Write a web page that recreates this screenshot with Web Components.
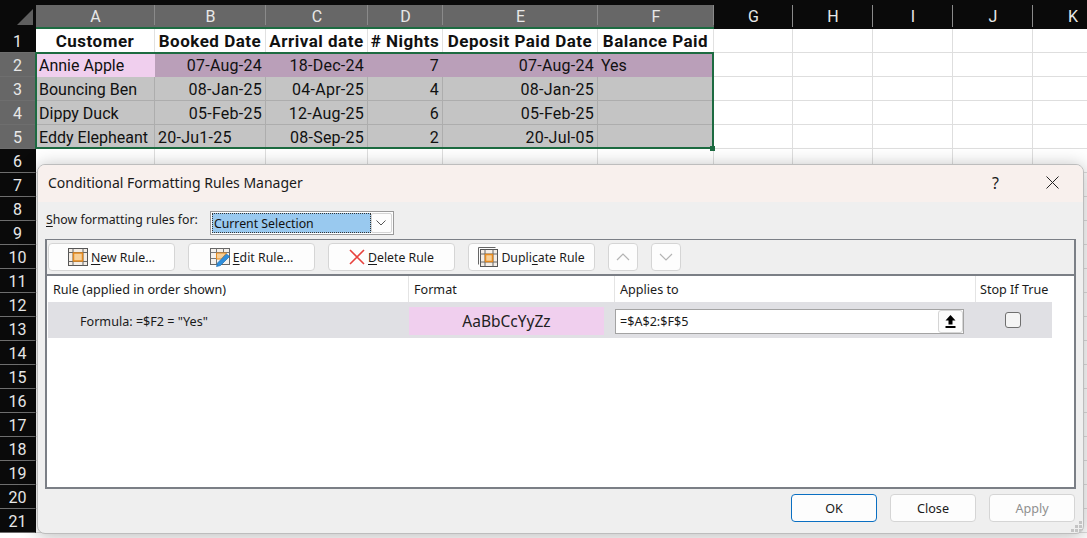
<!DOCTYPE html>
<html lang="en">
<head>
<meta charset="utf-8">
<title>Conditional Formatting Rules Manager</title>
<style>
  html, body { margin: 0; height: 538px; overflow: hidden; background: #fff; }
</style>
</head>
<body>
<xl-app></xl-app>
<script>
const UI_FONT = `"Noto Sans", "Open Sans", sans-serif`;
const ICONS = {
  new: `<svg width="20" height="18" viewBox="0 0 20 18"><rect x=".5" y=".5" width="19" height="17" fill="#f3ede6" stroke="#555"/><path d="M.5 4.500h19M.5 13.500h19M5 .5v17M15 .5v17" stroke="#666" fill="none"/><rect x="5.500" y="5" width="9" height="8" fill="#f7cf97" stroke="#e58a1f" stroke-width="1.500"/></svg>`,
  edit: `<svg width="20" height="19" viewBox="0 0 20 19"><rect x=".5" y=".5" width="19" height="16" fill="#f5f1ec" stroke="#666"/><path d="M.5 4.500h19M.5 10.500h7M6.500 .5v16M13.500 .5v6" stroke="#777" fill="none"/><path d="M6.500 5h10l-5 6H6.500z" fill="#f7cf97" stroke="#e58a1f"/><path d="M6.500 18.500l1-3.500 9-9 3 2.500-9 9z" fill="#2f8fdc" stroke="#1a6db5" stroke-width=".7"/></svg>`,
  del: `<svg width="16" height="16" viewBox="0 0 16 16"><path d="M1 1l14 14M15 1L1 15" stroke="#e8413c" stroke-width="1.600" fill="none"/></svg>`,
  dup: `<svg width="20" height="20" viewBox="0 0 20 20"><path d="M.5 17.500V.5h17" stroke="#666" fill="none"/><rect x="2.500" y="2.500" width="17" height="17" fill="#f3ede6" stroke="#555"/><path d="M2.500 7h17M2.500 15h17M7 2.500v17M15 2.500v17" stroke="#666" fill="none"/><rect x="7.500" y="7.500" width="7" height="7" fill="#f7cf97" stroke="#e58a1f" stroke-width="1.500"/></svg>`,
  up: `<svg width="14" height="8" viewBox="0 0 14 8"><path d="M1 7l6-6 6 6" stroke="#b4b4b4" stroke-width="1.200" fill="none"/></svg>`,
  down: `<svg width="14" height="8" viewBox="0 0 14 8"><path d="M1 1l6 6 6-6" stroke="#b4b4b4" stroke-width="1.200" fill="none"/></svg>`
};

class XlSheet extends HTMLElement {
  constructor() {
    super();
    this.attachShadow({ mode: "open" });
  }

  static get styles() {
    return /* css */`
      :host {
        display: block;
        position: relative;
        width: 1087px;
        height: 538px;
        overflow: hidden;
        font-family: Roboto, sans-serif;
        font-size: 16px;
        color: #111;
      }
      .grid {
        display: grid;
        grid-template-columns: 36px 119px 111px 102px 75px 155px 116px 79px 80px 80px 80px 80px;
        grid-template-rows: 29px 24px repeat(21, 24px);
      }
      .corner, .col, .row { background: #0a0a0a; color: #e8e8e8; display: flex; align-items: center; justify-content: center; box-sizing: border-box; font-size: 16px; }
      .corner { position: relative; }
      .corner::after { content: ""; position: absolute; right: 3px; bottom: 4px; border-style: solid; border-width: 0 0 16px 16px; border-color: transparent transparent #5f5f5f transparent; }
      .col { padding-top: 6px; padding-bottom: 2px; position: relative; }
      .col::after { content: ""; position: absolute; right: 0; top: 5px; bottom: 2px; width: 1px; background: #8a8a8a; }
      .col.on { background: linear-gradient(#0a0a0a 5px, #676767 5px); border-bottom: 2px solid #1d6b41; padding-bottom: 0; }
      .row { border-bottom: 1px solid #6e6e6e; border-right: 1px solid #0a0a0a; padding-top: 1px; }
      .row.on { background: #676767; border-right-color: #1d6b41; }
      .cell {
        box-sizing: border-box;
        padding: 1px 3px 0;
        display: flex;
        align-items: center;
        white-space: nowrap;
        overflow: hidden;
        border-right: 1px solid #e1e1e1;
        border-bottom: 1px solid #e1e1e1;
      }
      .cell.r { justify-content: flex-end; }
      .cell.d { letter-spacing: .25px; }
      .cell.h { justify-content: center; font-weight: 700; font-size: 17px; letter-spacing: .5px; padding: 0; }
      .cell.plain { border-color: #dedede; }
      .cell.g { background: #c4c4c4; border-color: #adadad; }
      .cell.m { background: #ba9fb9; border-color: #ba9fb9; }
      .cell.p { background: #f0cfee; border-color: #f0cfee; }
      .sel { position: absolute; left: 35px; top: 52px; width: 679px; height: 97px; box-sizing: border-box; border: 2px solid #1d6b41; pointer-events: none; }
      .sel::after { content: ""; position: absolute; right: -3px; bottom: -4px; width: 5px; height: 5px; background: #1d6b41; }
    `;
  }

  connectedCallback() {
    const cols = "ABCDEFGHIJK".split("");
    const data = [
      ["Customer", "Booked Date", "Arrival date", "# Nights", "Deposit Paid Date", "Balance Paid"],
      ["Annie Apple", "07-Aug-24", "18-Dec-24", "7", "07-Aug-24", "Yes"],
      ["Bouncing Ben", "08-Jan-25", "04-Apr-25", "4", "08-Jan-25", ""],
      ["Dippy Duck", "05-Feb-25", "12-Aug-25", "6", "05-Feb-25", ""],
      ["Eddy Elepheant", "20-Ju1-25", "08-Sep-25", "2", "20-Jul-05", ""]
    ];
    let html = `<div class="corner"></div>`;
    cols.forEach((c, i) => { html += `<div class="col ${i < 6 ? "on" : ""}">${c}</div>`; });
    for (let r = 0; r < 21; r++) {
      html += `<div class="row ${r >= 1 && r <= 4 ? "on" : ""}">${r + 1}</div>`;
      cols.forEach((c, i) => {
        const text = data[r] && data[r][i] ? data[r][i] : "";
        let cls = "cell plain";
        if (r === 0 && i < 6) cls = "cell h";
        else if (r === 1 && i === 0) cls = "cell p";
        else if (r === 1 && i < 6) cls = "cell m";
        else if (r >= 2 && r <= 4 && i < 6) cls = "cell g";
        const leftText = i === 0 || i === 5 || text === "20-Ju1-25";
        if (r > 0 && !leftText) cls += " r";
        if (r > 0 && i > 0 && i < 5) cls += " d";
        html += `<div class="${cls}">${text}</div>`;
      });
    }
    this.shadowRoot.innerHTML = /* html */`
      <style>${XlSheet.styles}</style>
      <div class="grid">${html}</div>
      <div class="sel"></div>
      <slot></slot>`;
  }
}

class XlButton extends HTMLElement {
  constructor() {
    super();
    this.attachShadow({ mode: "open" });
  }

  connectedCallback() {
    const icon = ICONS[this.getAttribute("icon")] || "";
    this.shadowRoot.innerHTML = /* html */`
      <style>
        :host {
          display: inline-flex;
          align-items: center;
          justify-content: center;
          gap: 3px;
          box-sizing: border-box;
          width: var(--w, 127px);
          height: 28px;
          background: #fdfdfd;
          border: 1px solid #d5d5d5;
          border-radius: 4px;
          font-size: 12.3px;
          color: #1a1a1a;
        }
        :host([primary]) { border-color: #0a6fc2; }
        :host([disabled]) { color: #8f8f8f; }
        svg { display: block; }
      </style>
      ${icon}<slot></slot>`;
  }
}

class XlCombo extends HTMLElement {
  constructor() {
    super();
    this.attachShadow({ mode: "open" });
  }

  connectedCallback() {
    this.shadowRoot.innerHTML = /* html */`
      <style>
        :host {
          display: flex;
          box-sizing: border-box;
          width: 184px;
          height: 24px;
          padding: 1px;
          background: #fdfdfd;
          border: 1px solid #9a9a9a;
          font-size: 12.3px;
          color: #111;
        }
        .value {
          flex: 1;
          box-sizing: border-box;
          padding-left: 2px;
          background: #99c9ef;
          outline: 1px dotted #333;
          outline-offset: -1px;
          display: flex;
          align-items: center;
        }
        .arrow { width: 21px; display: flex; align-items: center; justify-content: center; border: 1px solid #d5d5d5; border-radius: 2px; box-sizing: border-box; }
      </style>
      <div class="value"><slot></slot></div>
      <div class="arrow"><svg width="10" height="6" viewBox="0 0 10 6"><path d="M.5.500l4.500 4.500 4.500-4.500" stroke="#555" fill="none"/></svg></div>`;
  }
}

class XlRuleTable extends HTMLElement {
  constructor() {
    super();
    this.attachShadow({ mode: "open" });
  }

  connectedCallback() {
    this.shadowRoot.innerHTML = /* html */`
      <style>
        :host {
          display: block;
          flex: 1;
          background: #fff;
          border-top: 2px solid #7b7f86;
          font-size: 12.6px;
          color: #1a1a1a;
        }
        .table {
          display: grid;
          grid-template-columns: 361px 206px 361px 76px;
          grid-template-rows: 26px 36px;
          width: 1004px;
          margin-left: 1px;
        }
        .th { display: flex; align-items: center; padding-left: 5px; border-right: 1px solid #e4e4e4; }
        .th:nth-child(4) { border-right: 0; padding-left: 4px; }
        .td { background: #e0e0e4; display: flex; align-items: center; }
        .formula { padding: 3px 0 0 32px; }
        .format { padding: 5px 11px 3px 0; }
        .sample { flex: 1; height: 100%; background: #f0cfee; display: flex; align-items: center; justify-content: center; font-size: 15.5px; color: #222; }
        .applies { padding: 7px 12px 4px 0; }
        .field { flex: 1; height: 100%; box-sizing: border-box; background: #fff; border: 1px solid #a3a3a3; display: flex; align-items: center; justify-content: space-between; padding-left: 4px; }
        .pick { width: 25px; height: 100%; box-sizing: border-box; background: #fcfcfc; border: 1px solid #d5d5d5; border-radius: 3px; display: flex; align-items: center; justify-content: center; }
        .stop { justify-content: center; padding-right: 2px; }
        .check { width: 16px; height: 16px; box-sizing: border-box; background: #f4f4f4; border: 1px solid #6f6f6f; border-radius: 3px; }
      </style>
      <div class="table">
        <div class="th">Rule (applied in order shown)</div>
        <div class="th">Format</div>
        <div class="th">Applies to</div>
        <div class="th">Stop If True</div>
        <div class="td formula">Formula: =$F2 = "Yes"</div>
        <div class="td format"><div class="sample">AaBbCcYyZz</div></div>
        <div class="td applies">
          <div class="field">=$A$2:$F$5
            <span class="pick"><svg width="11" height="13" viewBox="0 0 11 13"><path d="M5.500 0L10.500 5.500H7.500V9.500H3.500V5.500H.5z M.5 11h10v2H.5z" fill="#000"/></svg></span>
          </div>
        </div>
        <div class="td stop"><div class="check"></div></div>
      </div>`;
  }
}

class XlDialog extends HTMLElement {
  constructor() {
    super();
    this.attachShadow({ mode: "open" });
  }

  static get styles() {
    return /* css */`
      :host {
        position: absolute;
        left: 37px;
        top: 164px;
        width: 1047px;
        height: 370px;
        box-sizing: border-box;
        display: flex;
        flex-direction: column;
        background: #efefef;
        border: 1px solid #bdbdbd;
        border-radius: 8px;
        box-shadow: 0 2px 18px rgba(0, 0, 0, .28);
        overflow: hidden;
        font-family: ${UI_FONT};
        font-size: 12.3px;
        color: #1a1a1a;
      }
      .title {
        height: 37px;
        box-sizing: border-box;
        flex: none;
        background: #f8f0ed;
        display: flex;
        align-items: center;
        padding: 0 24px 2px 10px;
        font-size: 14px;
      }
      .title span { flex: 1; }
      .title b { font-weight: 400; font-size: 16px; margin-right: 47px; }
      .show {
        display: flex;
        align-items: center;
        gap: 12px;
        padding: 9px 0 0 8px;
        height: 24px;
        flex: none;
      }
      .show .lbl { padding-bottom: 8px; }
      .panel {
        margin: 4px 7px 0 7px;
        flex: 1;
        display: flex;
        flex-direction: column;
        border: 2px solid #7b7f86;
        border-top-width: 1px;
      }
      .tools {
        height: 34px;
        flex: none;
        display: flex;
        align-items: center;
        gap: 13px;
        padding: 0 0 0 1px;
      }
      .foot {
        height: 44px;
        flex: none;
        display: flex;
        align-items: flex-start;
        justify-content: flex-end;
        gap: 13px;
        padding: 5px 8px 0 0;
        box-sizing: border-box;
      }
      .foot xl-button { --w: 86px; font-size: 12.6px; }
      .arrows { --w: 30px; }
      .grip { position: absolute; right: 0; bottom: 0; }
      u { text-underline-offset: 2px; }
    `;
  }

  connectedCallback() {
    this.shadowRoot.innerHTML = /* html */`
      <style>${XlDialog.styles}</style>
      <div class="title">
        <span>Conditional Formatting Rules Manager</span>
        <b>?</b>
        <svg width="13" height="13" viewBox="0 0 13 13"><path d="M.5.500l12 12M12.500.500l-12 12" stroke="#222" fill="none"/></svg>
      </div>
      <div class="show">
        <span class="lbl"><u>S</u>how formatting rules for:</span>
        <xl-combo>Current Selection</xl-combo>
      </div>
      <div class="panel">
        <div class="tools">
          <xl-button icon="new"><span><u>N</u>ew Rule...</span></xl-button>
          <xl-button icon="edit"><span><u>E</u>dit Rule...</span></xl-button>
          <xl-button icon="del"><span><u>D</u>elete Rule</span></xl-button>
          <xl-button icon="dup"><span>Dupli<u>c</u>ate Rule</span></xl-button>
          <xl-button class="arrows" icon="up"></xl-button>
          <xl-button class="arrows" icon="down"></xl-button>
        </div>
        <xl-rule-table></xl-rule-table>
      </div>
      <div class="foot">
        <xl-button primary>OK</xl-button>
        <xl-button>Close</xl-button>
        <xl-button disabled>Apply</xl-button>
      </div>
      <svg class="grip" width="12" height="12" viewBox="0 0 12 12" fill="#c4c4c4"><rect x="8" y="0" width="3" height="3"/><rect x="4" y="4" width="3" height="3"/><rect x="8" y="4" width="3" height="3"/><rect x="0" y="8" width="3" height="3"/><rect x="4" y="8" width="3" height="3"/><rect x="8" y="8" width="3" height="3"/></svg>`;
  }
}

class XlApp extends HTMLElement {
  constructor() {
    super();
    this.attachShadow({ mode: "open" });
  }

  connectedCallback() {
    this.shadowRoot.innerHTML = /* html */`
      <style>:host { display: block; }</style>
      <xl-sheet><xl-dialog></xl-dialog></xl-sheet>`;
  }
}

customElements.define("xl-sheet", XlSheet);
customElements.define("xl-button", XlButton);
customElements.define("xl-combo", XlCombo);
customElements.define("xl-rule-table", XlRuleTable);
customElements.define("xl-dialog", XlDialog);
customElements.define("xl-app", XlApp);
</script>
</body>
</html>
